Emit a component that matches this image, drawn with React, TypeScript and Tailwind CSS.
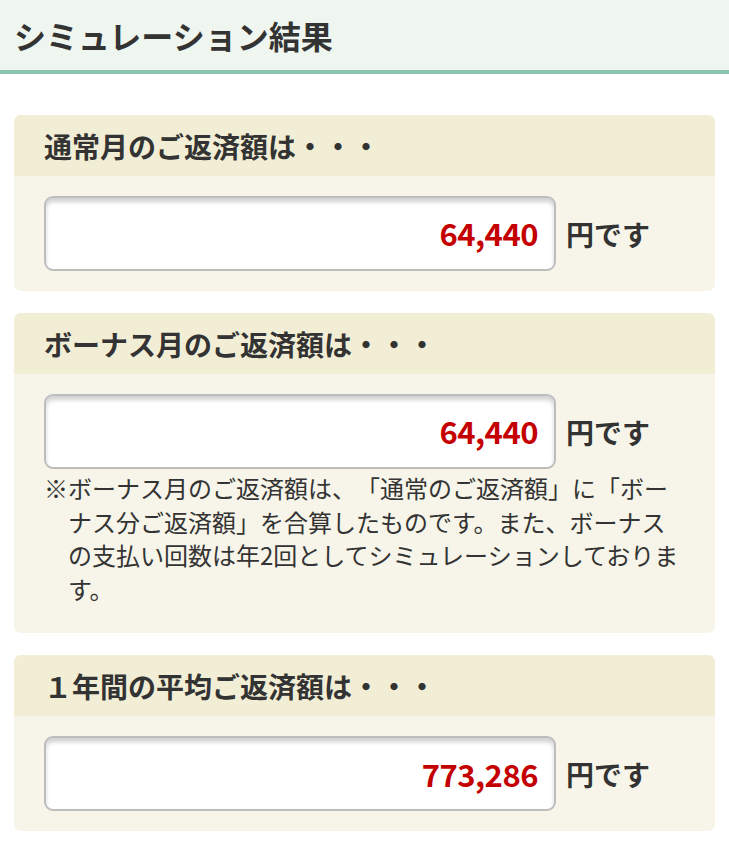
import React from "react";

const font = { fontFamily: '"Noto Sans CJK JP", "Noto Sans", sans-serif' };

function Amount({ value }: { value: string }) {
  return (
    <div className="flex items-center">
      <div className="w-[512px] h-[75px] bg-white border-2 border-[#bdbdbd] rounded-[9px] shadow-[inset_0_4px_4px_rgba(0,0,0,0.18)] flex items-center justify-end pr-[16px]">
        <span className="text-[31px] font-bold text-[#c40000] tracking-[-0.5px]">{value}</span>
      </div>
      <span className="ml-[10px] text-[28px] font-bold text-[#333]">円です</span>
    </div>
  );
}

function Card({ title, value, children }: { title: string; value: string; children?: React.ReactNode }) {
  return (
    <div className="mx-[14px] rounded-[7px] overflow-hidden bg-[#f7f5e9]">
      <div className="h-[61px] bg-[#f2eed5] flex items-center pl-[30px]">
        <span className="text-[28px] font-bold text-[#333]">{title}</span>
      </div>
      <div className={children ? "pt-[20px] pb-[28px] px-[30px]" : "py-[20px] px-[30px]"}>
        <Amount value={value} />
        {children}
      </div>
    </div>
  );
}

export default function App() {
  return (
    <div style={font} className="w-[729px] min-h-[853px] bg-white [text-spacing-trim:space-all]">
      <div className="h-[74px] bg-[#eff5ef] border-b-4 border-[#8bc3b0] flex items-center pl-[14px]">
        <h1 className="text-[32px] font-bold text-[#333]">シミュレーション結果</h1>
      </div>
      <div className="pt-[41px] flex flex-col gap-[22px]">
        <Card title="通常月のご返済額は・・・" value="64,440" />
        <Card title="ボーナス月のご返済額は・・・" value="64,440">
          <p className="mt-[2px] text-[24px] leading-[33.6px] text-[#333] pl-[24px] -indent-[24px] pr-[2px] [text-spacing-trim:space-all]">
            ※ボーナス月のご返済額は、「通常のご返済額」に「ボーナス分ご返済額」を合算したものです。また、ボーナスの支払い回数は年2回としてシミュレーションしております。
          </p>
        </Card>
        <Card title="１年間の平均ご返済額は・・・" value="773,286" />
      </div>
    </div>
  );
}
